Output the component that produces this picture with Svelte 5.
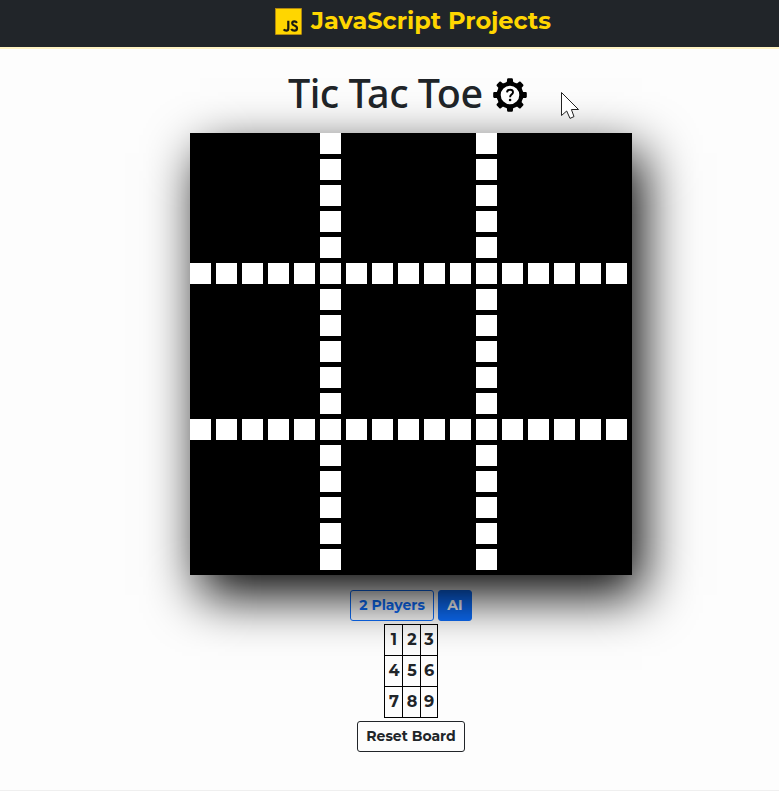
<script>
  const size = 17;
  const cells = Array.from({ length: size * size }, (_, i) => {
    const row = Math.floor(i / size);
    const col = i % size;
    return row === 5 || row === 11 || col === 5 || col === 11;
  });
  const rows = [[1, 2, 3], [4, 5, 6], [7, 8, 9]];
  const teeth = [0, 45, 90, 135, 180, 225, 270, 315];
</script>

<div class="page">
  <header>
    <svg class="logo" width="27" height="27" viewBox="0 0 27 27">
      <rect x=".5" y=".5" width="26" height="26" fill="#ffd600" stroke="#c98f10" stroke-width=".6" />
      <path d="M13.3 12.7V20.4Q13.3 22.6 11.3 22.6Q9.6 22.6 8.7 21.3" fill="none" stroke="#1b1b10" stroke-width="2.2" />
      <path d="M22 14.8Q21 13.4 19.4 13.4Q17.2 13.4 17.2 15.3Q17.2 16.8 19.4 17.5Q22 18.4 22 20.3Q22 22.7 19.4 22.7Q17.2 22.7 16.2 21" fill="none" stroke="#1b1b10" stroke-width="2.2" />
    </svg>
    <span class="brand">JavaScript Projects</span>
  </header>

  <main>
    <div class="heading">
      <h1>Tic Tac Toe</h1>
      <svg class="gear" width="34" height="34" viewBox="-17 -17 34 34">
        {#each teeth as angle}
          <path d="M-4.6 -11L-3.1 -13.4L-2.9 -15.8Q-2.8 -16.8 -1.8 -16.8H1.8Q2.8 -16.8 2.9 -15.8L3.1 -13.4L4.6 -11Z" transform="rotate({angle})" />
        {/each}
        <circle r="11.3" fill="#fff" stroke="#000" stroke-width="4" />
        <path d="M-3 -2.7Q-2.8 -5.2 .1 -5.2Q3 -5.2 3 -2.8Q3 -1.4 1.4 -.4Q.1 .5 .1 2.2" fill="none" stroke="#000" stroke-width="1.9" />
        <circle cx=".1" cy="5" r="1.3" />
      </svg>
    </div>

    <div class="board">
      {#each cells as filled}
        <i class:filled></i>
      {/each}
    </div>

    <div class="modes">
      <button class="outline">2 Players</button>
      <button class="solid">AI</button>
    </div>

    <table>
      <tbody>
        {#each rows as row}
          <tr>
            {#each row as n}<td>{n}</td>{/each}
          </tr>
        {/each}
      </tbody>
    </table>

    <button class="reset">Reset Board</button>
  </main>

  <svg class="cursor" width="20" height="29" viewBox="0 0 20 29">
    <path d="M1.5 1.5V24.5L6.7 20L10 27.4L14 25.6L11.4 18.5H18.5Z" fill="#fff" stroke="#222" stroke-width="1" />
  </svg>
</div>

<style>
  :global(body) {
    margin: 0;
    background: #fdfdfd;
  }
  .page {
    position: relative;
    box-sizing: border-box;
    height: 791px;
    overflow: hidden;
    border-bottom: 1px solid #efefef;
    background: #fdfdfd;
    color: #212529;
    font-family: Montserrat, Inter, sans-serif;
  }
  header {
    display: flex;
    box-sizing: border-box;
    height: 49px;
    padding: 0 0 5px 275px;
    align-items: center;
    background: #212529;
    border-bottom: 2px solid #fff3c4;
  }
  .logo {
    flex: none;
  }
  .brand {
    margin-left: 9px;
    color: #ffd600;
    font-size: 24px;
    font-weight: 700;
    line-height: 36px;
    white-space: nowrap;
  }
  main {
    display: flex;
    width: 442px;
    margin-left: 190px;
    flex-direction: column;
    align-items: center;
  }
  .heading {
    display: flex;
    box-sizing: border-box;
    width: 100%;
    height: 84px;
    padding: 20px 0 0 98px;
    align-items: flex-start;
  }
  h1 {
    width: 205px;
    margin: 0;
    font: 500 39.5px/48px "Noto Sans", sans-serif;
    letter-spacing: -0.5px;
    white-space: nowrap;
  }
  .gear {
    margin-top: 9px;
    flex: none;
  }
  .board {
    position: relative;
    z-index: 1;
    display: grid;
    width: 442px;
    height: 442px;
    grid-template-columns: repeat(17, 26px);
    grid-template-rows: repeat(17, 26px);
    background: #000;
    box-shadow: 10px 20px 50px #000;
  }
  .filled {
    width: 21px;
    height: 21px;
    background: #fff;
  }
  .modes {
    display: flex;
    margin-top: 15px;
    gap: 4px;
  }
  button {
    box-sizing: border-box;
    height: 31px;
    padding: 0;
    border: 1px solid #0d6efd;
    border-radius: 3px;
    font: 700 14px/21px Montserrat, Inter, sans-serif;
    white-space: nowrap;
  }
  .outline {
    width: 84px;
    background: transparent;
    color: #0d6efd;
  }
  .solid {
    width: 34px;
    background: #0d6efd;
    color: #fff;
  }
  table {
    width: 54px;
    margin-top: 3px;
    border-collapse: collapse;
    table-layout: fixed;
  }
  td {
    box-sizing: border-box;
    height: 31px;
    padding: 0;
    border: 1px solid #000;
    font-size: 16px;
    font-weight: 700;
    line-height: 28px;
    text-align: center;
  }
  td:nth-child(-n + 2) {
    width: 18px;
    padding-left: 1px;
  }
  .reset {
    width: 108px;
    margin-top: 3px;
    border-color: #212529;
    background: transparent;
    color: #212529;
  }
  .cursor {
    position: absolute;
    z-index: 2;
    top: 91px;
    left: 560px;
  }
</style>
